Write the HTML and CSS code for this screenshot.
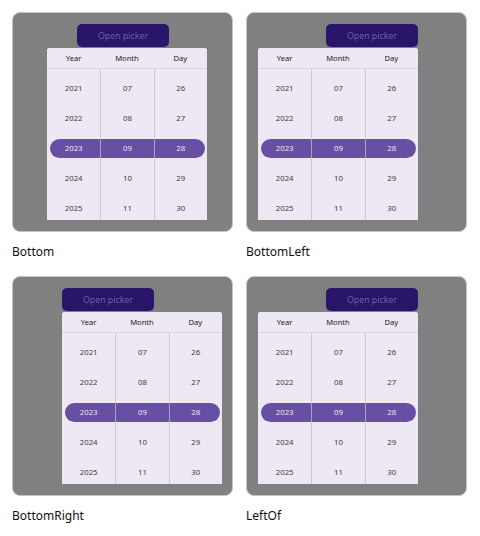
FILE: index.html
```html
<!DOCTYPE html>
<html lang="en">
<head>
    <meta charset="UTF-8">
    <title>Picker placement</title>
    <link rel="stylesheet" href="styles.css">
</head>
<body>
    <div class="demo-grid">
        <div class="demo-cell">
            <div class="stage">
                <div class="anchor anchor-bottom">
                    <button class="open-btn">Open picker</button>
                    <div class="picker place-bottom" data-picker></div>
                </div>
            </div>
            <div class="demo-label">Bottom</div>
        </div>

        <div class="demo-cell">
            <div class="stage">
                <div class="anchor anchor-end">
                    <button class="open-btn">Open picker</button>
                    <div class="picker place-bottom-left" data-picker></div>
                </div>
            </div>
            <div class="demo-label">BottomLeft</div>
        </div>

        <div class="demo-cell">
            <div class="stage">
                <div class="anchor anchor-start">
                    <button class="open-btn">Open picker</button>
                    <div class="picker place-bottom-right" data-picker></div>
                </div>
            </div>
            <div class="demo-label">BottomRight</div>
        </div>

        <div class="demo-cell">
            <div class="stage">
                <div class="anchor anchor-end">
                    <button class="open-btn">Open picker</button>
                    <div class="picker place-bottom-left" data-picker></div>
                </div>
            </div>
            <div class="demo-label">LeftOf</div>
        </div>
    </div>

    <script>
        // build the wheel columns for every picker
        const columns = [
            { title: 'Year', items: ['2021', '2022', '2023', '2024', '2025'] },
            { title: 'Month', items: ['07', '08', '09', '10', '11'] },
            { title: 'Day', items: ['26', '27', '28', '29', '30'] }
        ];
        const selected = 2;

        document.querySelectorAll('[data-picker]').forEach(picker => {
            const head = document.createElement('div');
            head.className = 'picker-head';
            columns.forEach(col => {
                const cell = document.createElement('div');
                cell.className = 'head-cell';
                cell.textContent = col.title;
                head.appendChild(cell);
            });
            picker.appendChild(head);

            const body = document.createElement('div');
            body.className = 'picker-body';

            const band = document.createElement('div');
            band.className = 'select-band';
            body.appendChild(band);

            columns.forEach(col => {
                const wheel = document.createElement('div');
                wheel.className = 'wheel';
                col.items.forEach((text, i) => {
                    const item = document.createElement('div');
                    item.className = i === selected ? 'wheel-item is-selected' : 'wheel-item';
                    item.textContent = text;
                    wheel.appendChild(item);
                });
                body.appendChild(wheel);
            });
            picker.appendChild(body);
        });
    </script>
</body>
</html>
```

FILE: styles.css
```css
* {
    margin: 0;
    padding: 0;
    box-sizing: border-box;
}

body {
    font-family: 'Noto Sans', 'Open Sans', sans-serif;
    background: #ffffff;
    color: #1a1a1a;
    padding: 12px 0 0 12px;
}

.demo-grid {
    display: grid;
    grid-template-columns: 221px 221px;
    column-gap: 13px;
    row-gap: 16px;
}

.demo-cell {
    display: flex;
    flex-direction: column;
}

/* grey preview area */
.stage {
    height: 220px;
    background: #808080;
    border: 1px solid #c4c4c4;
    border-radius: 8px;
    padding-top: 11px;
}

.demo-label {
    margin-top: 12px;
    font-size: 12px;
    line-height: 16px;
    color: #111111;
}

.anchor {
    position: relative;
    width: 92px;
}

.anchor-bottom { margin-left: 64px; }
.anchor-end { margin-left: 79px; }
.anchor-start { margin-left: 49px; }

.open-btn {
    display: block;
    width: 92px;
    height: 23px;
    border: none;
    border-radius: 5px;
    background: #291569;
    color: #6f5ea8;
    font-family: 'Noto Sans', 'Open Sans', sans-serif;
    font-size: 8.8px;
}

/* popup */
.picker {
    position: absolute;
    top: 24px;
    width: 160px;
    height: 172px;
    background: #eee8f4;
    border-radius: 2px 2px 0 0;
    overflow: hidden;
    z-index: 2;
}

.place-bottom { left: -30px; }
.place-bottom-left { right: 0; }
.place-bottom-right { left: 0; }

.picker-head {
    display: grid;
    grid-template-columns: repeat(3, 1fr);
    height: 21px;
    border-bottom: 1px solid #ddd5e3;
}

.head-cell {
    display: flex;
    align-items: center;
    justify-content: center;
    font-size: 7.6px;
    color: #1d1b20;
}

.picker-body {
    position: relative;
    display: grid;
    grid-template-columns: repeat(3, 1fr);
}

.select-band {
    position: absolute;
    left: 2.5px;
    right: 2.5px;
    top: 69.5px;
    height: 19px;
    border-radius: 10px;
    background: #6750a4;
}

.wheel {
    position: relative;
    z-index: 1;
    padding-top: 4px;
}

.wheel + .wheel {
    border-left: 1.5px solid rgba(196, 188, 206, 0.75);
}

.wheel-item {
    height: 30px;
    display: flex;
    align-items: center;
    justify-content: center;
    font-size: 7.8px;
    color: #3f3b45;
}

.wheel-item.is-selected {
    color: #ece4f8;
}
```
